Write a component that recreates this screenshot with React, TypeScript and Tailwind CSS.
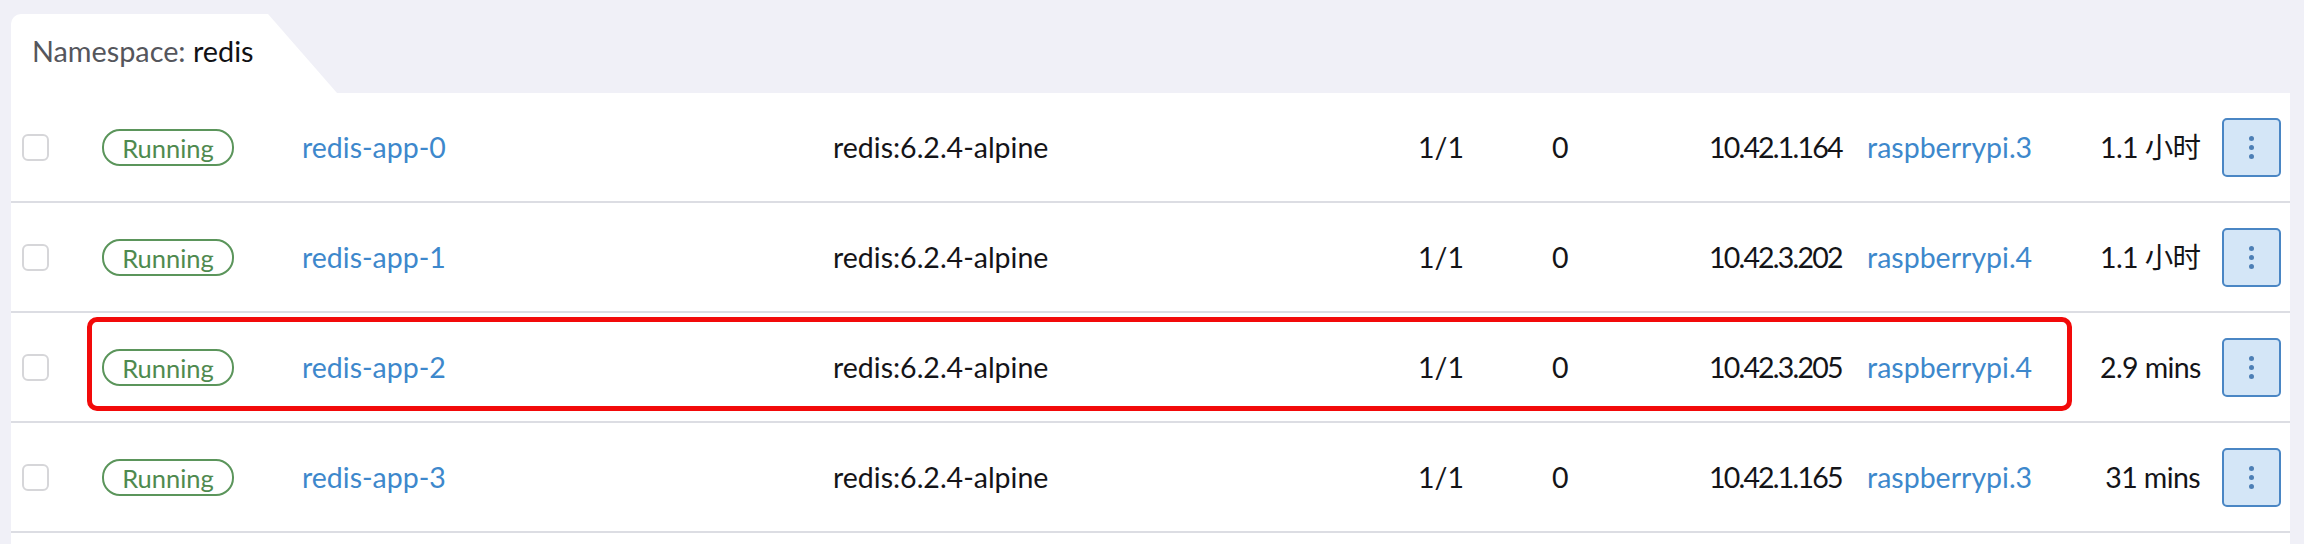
import React from 'react';

type Pod = {
  name: string;
  image: string;
  ready: string;
  restarts: string;
  ip: string;
  node: string;
  age: string;
  marked?: boolean;
};

const pods: Pod[] = [
  { name: 'redis-app-0', image: 'redis:6.2.4-alpine', ready: '1/1', restarts: '0', ip: '10.42.1.164', node: 'raspberrypi.3', age: '1.1 小时' },
  { name: 'redis-app-1', image: 'redis:6.2.4-alpine', ready: '1/1', restarts: '0', ip: '10.42.3.202', node: 'raspberrypi.4', age: '1.1 小时' },
  { name: 'redis-app-2', image: 'redis:6.2.4-alpine', ready: '1/1', restarts: '0', ip: '10.42.3.205', node: 'raspberrypi.4', age: '2.9 mins', marked: true },
  { name: 'redis-app-3', image: 'redis:6.2.4-alpine', ready: '1/1', restarts: '0', ip: '10.42.1.165', node: 'raspberrypi.3', age: '31 mins' },
];

const cols =
  'grid grid-cols-[91px_200px_531px_585px_134px_157px_158px_233px_100px_22px_59px_9px] items-center';

const Row = ({ pod }: { pod: Pod }) => (
  <div className={`${cols} relative h-[110px] border-b-2 border-[#dcdde3]`}>
    <div className="pl-[11px]">
      <div className="w-[27px] h-[27px] rounded-[6px] border-2 border-[#d6d6d9] bg-white" />
    </div>
    <div>
      <span className="inline-flex items-center justify-center w-[132px] h-[37px] rounded-[18px] border-2 border-[#5b955b] text-[#4f8a4f] text-[25.5px]">
        Running
      </span>
    </div>
    <div className="text-[#3d88cc]">{pod.name}</div>
    <div>{pod.image}</div>
    <div>{pod.ready}</div>
    <div>{pod.restarts}</div>
    <div className="whitespace-nowrap tracking-[-1.8px]">{pod.ip}</div>
    <div className="text-[#3d88cc]">{pod.node}</div>
    <div className="text-right whitespace-nowrap tracking-[-0.6px]">{pod.age}</div>
    <div />
    <button className="w-[59px] h-[59px] rounded-[5px] border-2 border-[#4a86c4] bg-[#d4e6f7] flex flex-col items-center justify-center gap-[4px]">
      <span className="w-[5px] h-[5px] rounded-full bg-[#4d7fb5]" />
      <span className="w-[5px] h-[5px] rounded-full bg-[#4d7fb5]" />
      <span className="w-[5px] h-[5px] rounded-full bg-[#4d7fb5]" />
    </button>
    <div />
    {pod.marked && (
      <div className="absolute left-[76px] top-[4px] w-[1985px] h-[94px] rounded-[10px] border-[5px] border-[#f20a0a] pointer-events-none" />
    )}
  </div>
);

export default function App() {
  return (
    <div
      className="w-[2304px] h-[544px] overflow-hidden bg-[#f0f0f7] pl-[11px] pr-[14px] pt-[14px] text-[28.5px] text-[#141418]"
      style={{ fontFamily: "Lato, 'Noto Sans CJK SC', sans-serif" }}
    >
      <div className="w-[326px] h-[79px] bg-white rounded-tl-[10px] [clip-path:polygon(0_0,257px_0,100%_100%,0_100%)] flex items-center pl-[21px] pb-[4px] text-[28.8px]">
        <span className="text-[#55565c]">Namespace:&nbsp;</span>
        <span className="text-[#111114]">redis</span>
      </div>
      <div className="bg-white">
        {pods.map((pod) => (
          <Row key={pod.name} pod={pod} />
        ))}
        <div className="h-[40px]" />
      </div>
    </div>
  );
}
